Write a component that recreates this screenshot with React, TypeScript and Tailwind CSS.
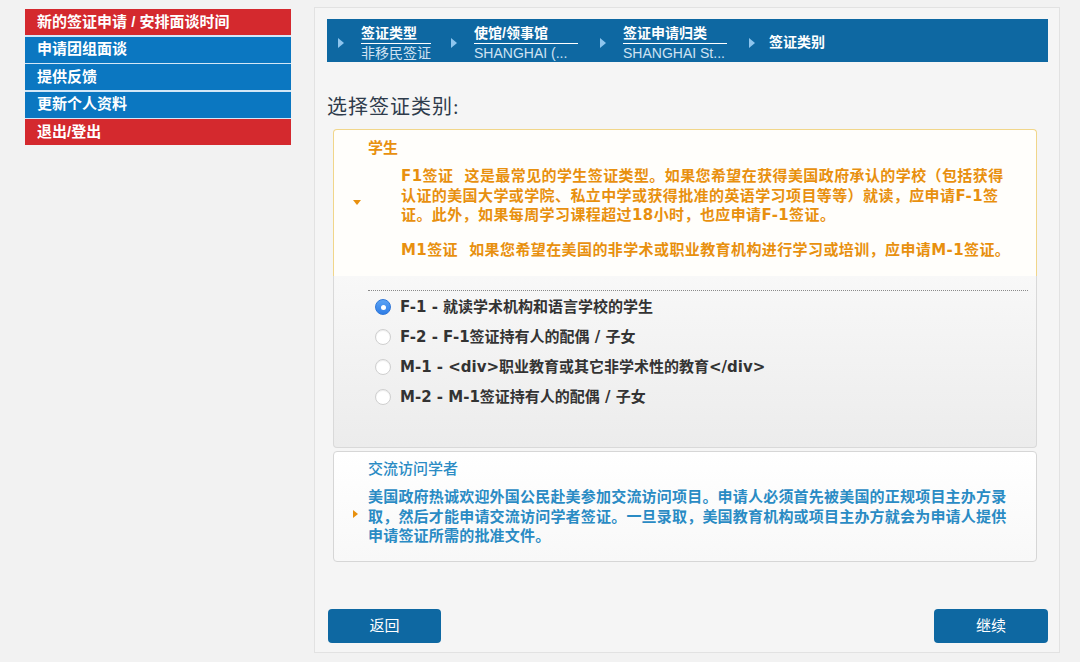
import React from "react";

const sans = { fontFamily: '"Liberation Sans", "Noto Sans CJK SC", sans-serif' };
const card = { fontFamily: '"DejaVu Sans", "Noto Sans CJK SC", sans-serif' };
const serif = { fontFamily: '"Liberation Serif", "Noto Sans CJK SC", serif' };

function Arrow() {
  return (
    <svg width="6" height="10" viewBox="0 0 6 10" className="shrink-0">
      <path d="M0 0 L6 5 L0 10 Z" fill="#8ec5ee" />
    </svg>
  );
}

function Crumb({ title, sub, w }: { title: string; sub: string; w: string }) {
  return (
    <div className={`ml-[17px] flex flex-col ${w}`}>
      <div className="text-[14px] leading-[18px] font-bold text-white border-b border-white pb-[1px] whitespace-nowrap">
        {title}
      </div>
      <div className="text-[14px] leading-[18px] text-[#cfe2f2] whitespace-nowrap">{sub}</div>
    </div>
  );
}

function Radio({ checked, label, first }: { checked?: boolean; label: string; first?: boolean }) {
  return (
    <div className={`h-[30px] flex items-center pl-[7px] ${first ? "mt-[1px]" : ""}`}>
      {checked ? (
        <div className="w-[16px] h-[16px] rounded-full bg-gradient-to-b from-[#5aa3f5] to-[#2f7de6] border border-[#2f77d8] flex items-center justify-center">
          <div className="w-[5px] h-[5px] rounded-full bg-white" />
        </div>
      ) : (
        <div className="w-[16px] h-[16px] rounded-full bg-white border border-[#cfcfcf] shadow-[inset_0_1px_1px_rgba(0,0,0,0.08)]" />
      )}
      <span className="ml-[9px] text-[15px] font-bold text-[#333333] whitespace-nowrap">{label}</span>
    </div>
  );
}

export default function App() {
  const menu = [
    { t: "新的签证申请 / 安排面谈时间", red: true },
    { t: "申请团组面谈", red: false },
    { t: "提供反馈", red: false },
    { t: "更新个人资料", red: false },
    { t: "退出/登出", red: true },
  ];
  return (
    <div className="w-[1080px] h-[662px] bg-[#f2f2f2] flex items-start overflow-hidden" style={sans}>
      <div className="ml-[25px] mt-[9px] w-[266px] flex flex-col gap-[1.5px] bg-[#d3e7f7]">
        {menu.map((m) => (
          <div
            key={m.t}
            className={`h-[26px] flex items-center pl-[12px] text-[15px] font-bold text-white ${
              m.red ? "bg-[#d4292e]" : "bg-[#0b77c1]"
            }`}
          >
            {m.t}
          </div>
        ))}
      </div>

      <div className="ml-[23px] mt-[7px] w-[746px] h-[646px] border border-[#e2e2e2] bg-[#f5f5f5] flex flex-col pt-[11px] pl-[12px] pr-[11px] pb-[9px]">
        {/* breadcrumb */}
        <div className="h-[43px] bg-[#0e68a2] flex items-start pl-[11px] pt-[5px]">
          <div className="flex items-center self-center"><Arrow /></div>
          <Crumb title="签证类型" sub="非移民签证" w="w-[70px]" />
          <div className="ml-[20px] flex items-center self-center"><Arrow /></div>
          <Crumb title="使馆/领事馆" sub="SHANGHAI (..." w="w-[104px]" />
          <div className="ml-[22px] flex items-center self-center"><Arrow /></div>
          <Crumb title="签证申请归类" sub="SHANGHAI St..." w="w-[104px]" />
          <div className="ml-[22px] flex items-center self-center"><Arrow /></div>
          <div className="ml-[14px] self-center text-[14px] font-bold text-white pb-[2px]">签证类别</div>
        </div>

        <div className="mt-[33px] text-[20px] leading-[24px] text-[#2e3b4b] tracking-[1px]" style={serif}>
          选择签证类别:
        </div>

        {/* student card */}
        <div className="mt-[10px] ml-[6px] w-[704px] flex flex-col" style={card}>
          <div className="border border-b-0 border-[#f1d68a] rounded-t-[4px] bg-[#fffefb] flex pt-[8px] pb-[16px]">
            <div className="w-[34px] shrink-0 flex items-center justify-end pr-[7px]">
              <svg width="8" height="5" viewBox="0 0 8 5" className="mt-[6px]">
                <path d="M0 0 L8 0 L4 5 Z" fill="#e8900e" />
              </svg>
            </div>
            <div className="flex flex-col">
              <div className="text-[15px] leading-[20px] font-bold text-[#e8900e]">学生</div>
              <div className="ml-[33px] mt-[9px] text-[15px] leading-[19.5px] font-bold text-[#e8900e] whitespace-pre tracking-[0.4px]">
                <div>F1签证  这是最常见的学生签证类型。如果您希望在获得美国政府承认的学校（包括获得</div>
                <div>认证的美国大学或学院、私立中学或获得批准的英语学习项目等等）就读，应申请F-1签</div>
                <div>证。此外，如果每周学习课程超过18小时，也应申请F-1签证。</div>
                <div className="mt-[15px]">M1签证  如果您希望在美国的非学术或职业教育机构进行学习或培训，应申请M-1签证。</div>
              </div>
            </div>
          </div>
          <div className="border border-t-0 border-[#d9d9d9] rounded-b-[4px] bg-gradient-to-b from-[#f8f8f8] to-[#ececec] pt-[14px] pb-[35px] pl-[34px] pr-[8px]">
            <div className="border-t border-dotted border-[#8a8a8a]" />
            <Radio first checked label="F-1 - 就读学术机构和语言学校的学生" />
            <Radio label="F-2 - F-1签证持有人的配偶 / 子女" />
            <Radio label="M-1 - <div>职业教育或其它非学术性的教育</div>" />
            <Radio label="M-2 - M-1签证持有人的配偶 / 子女" />
          </div>
        </div>

        {/* exchange card */}
        <div
          className="mt-[3px] ml-[6px] w-[704px] border border-[#d6d6d6] rounded-[4px] bg-gradient-to-b from-[#ffffff] to-[#f8f8f8] flex pt-[7px] pb-[14px]"
          style={card}
        >
          <div className="w-[34px] shrink-0 flex items-center justify-end pr-[10px]">
            <svg width="5" height="8" viewBox="0 0 5 8" className="mt-[22px]">
              <path d="M0 0 L5 4 L0 8 Z" fill="#e8900e" />
            </svg>
          </div>
          <div className="flex flex-col">
            <div className="text-[15px] leading-[20px] font-medium text-[#2a8bc4]">交流访问学者</div>
            <div className="mt-[9px] text-[15px] leading-[19.5px] font-bold text-[#2a8bc4] whitespace-nowrap tracking-[0.2px]">
              <div>美国政府热诚欢迎外国公民赴美参加交流访问项目。申请人必须首先被美国的正规项目主办方录</div>
              <div>取，然后才能申请交流访问学者签证。一旦录取，美国教育机构或项目主办方就会为申请人提供</div>
              <div>申请签证所需的批准文件。</div>
            </div>
          </div>
        </div>

        <div className="mt-auto flex justify-between">
          <button className="ml-[1px] w-[113px] h-[34px] rounded-[4px] bg-[#0e68a2] text-white text-[15px]">返回</button>
          <button className="w-[114px] h-[34px] rounded-[4px] bg-[#0e68a2] text-white text-[15px]">继续</button>
        </div>
      </div>
    </div>
  );
}
